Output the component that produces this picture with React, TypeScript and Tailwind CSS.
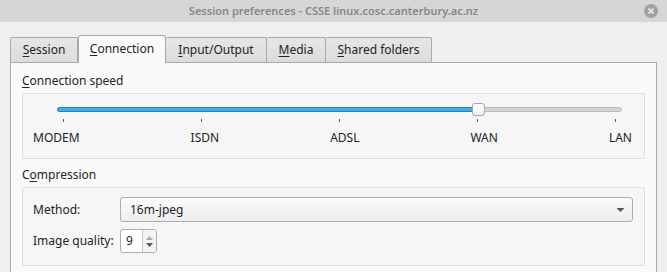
import React from 'react'

const TABS = [
  { key: 's', label: 'Session', mn: 0, w: 'w-[68px]' },
  { key: 'c', label: 'Connection', mn: 0, w: 'w-[88px]' },
  { key: 'io', label: 'Input/Output', mn: 0, w: 'w-[101px]' },
  { key: 'm', label: 'Media', mn: 0, w: 'w-[59px]' },
  { key: 'sf', label: 'Shared folders', mn: 0, w: 'w-[106px]' },
]

const SPEEDS = ['MODEM', 'ISDN', 'ADSL', 'WAN', 'LAN']
const SPEED_INDEX = 3

// underline the mnemonic letter, like Qt does
function Mnemonic({ text, at }: { text: string; at: number }) {
  return (
    <>
      {text.slice(0, at)}
      <span className="underline underline-offset-[2px] decoration-1">{text[at]}</span>
      {text.slice(at + 1)}
    </>
  )
}

function Tabs() {
  return (
    <div className="flex items-end h-[28px]">
      {TABS.map(t => {
        const active = t.key === 'c'
        return (
          <div
            key={t.key}
            className={
              active
                ? `${t.w} h-[28px] -mb-px z-10 flex items-center justify-center border border-b-0 border-[#a9a9a9] rounded-t-[3px] bg-[#fafafa]`
                : `${t.w} h-[25px] flex items-center justify-center border border-l-0 first:border-l border-b-0 border-[#a9a9a9] rounded-t-[2px] bg-gradient-to-b from-[#e6e6e6] to-[#dcdcdc]`
            }
          >
            <span className={active ? 'pb-[1px]' : ''}>
              <Mnemonic text={t.label} at={t.mn} />
            </span>
          </div>
        )
      })}
    </div>
  )
}

function SpeedSlider() {
  const pct = (SPEED_INDEX / (SPEEDS.length - 1)) * 100
  return (
    <div className="h-[66px] border border-[#dedede] rounded-[2px] bg-[#f6f6f6] flex flex-col">
      <div className="pl-[34px] pr-[22px] pt-[13px]">
        <div className="relative h-[5px]">
          <div className="absolute inset-0 rounded-full bg-[#d4d4d4] border border-[#b9b9b9]" />
          <div
            className="absolute left-0 top-0 bottom-0 rounded-full bg-[#3daee9] border border-[#2c7fb5]"
            style={{ width: `${pct}%` }}
          />
          <div className="absolute inset-y-0 left-[6px] right-[6px]">
            <div
              className="absolute top-[-4px] w-[13px] h-[13px] -ml-[6px] rounded-[3px] border border-[#a5a5a5] bg-gradient-to-b from-white to-[#f0f0f0]"
              style={{ left: `${pct}%` }}
            />
          </div>
        </div>
        <div className="flex justify-between px-[6px] mt-[7px]">
          {SPEEDS.map(s => (
            <div key={s} className="w-px h-[3px] bg-[#2f5f86]" />
          ))}
        </div>
      </div>
      <div className="flex justify-between pl-[10px] pr-[12px] mt-[7px] leading-[18px]">
        {SPEEDS.map(s => (
          <span key={s}>{s}</span>
        ))}
      </div>
    </div>
  )
}

function Compression() {
  return (
    <div className="h-[79px] border border-[#dedede] rounded-[2px] bg-[#f6f6f6] pl-[10px] pr-[11px] pt-[9px] flex flex-col gap-[7px]">
      <div className="flex items-center">
        <span className="w-[87px] whitespace-nowrap">Method:</span>
        <div className="flex-1 h-[25px] flex items-center justify-between pl-[9px] pr-[7px] border border-[#adadad] rounded-[3px] bg-gradient-to-b from-[#fbfbfb] to-[#ededed]">
          <span>16m-jpeg</span>
          <svg width="9" height="6" viewBox="0 0 9 6">
            <path d="M0.5 1 L8.5 1 L4.5 5 Z" fill="#555" />
          </svg>
        </div>
      </div>
      <div className="flex items-center">
        <span className="w-[87px] whitespace-nowrap">Image quality:</span>
        <div className="w-[37px] h-[24px] flex border border-[#adadad] rounded-[3px] bg-white">
          <span className="flex-1 pl-[5px] flex items-center">9</span>
          <div className="w-[14px] border-l border-[#c8c8c8] bg-[#f3f3f3] rounded-r-[3px] flex flex-col items-center justify-center gap-[3px]">
            <svg width="7" height="4" viewBox="0 0 7 4">
              <path d="M0 4 L3.5 0 L7 4 Z" fill="#a8a8a8" />
            </svg>
            <svg width="7" height="4" viewBox="0 0 7 4">
              <path d="M0 0 L7 0 L3.5 4 Z" fill="#555" />
            </svg>
          </div>
        </div>
      </div>
    </div>
  )
}

export default function App() {
  return (
    <div className="w-[667px] h-[272px] overflow-hidden bg-[#efefef] text-[12px] text-[#232323] font-['Noto_Sans',sans-serif]">
      <div className="relative h-[22px] bg-[#d6d6d6] flex items-center justify-center">
        <span className="text-[#868686] font-semibold text-[11px]">Session preferences - CSSE linux.cosc.canterbury.ac.nz</span>
        <div className="absolute right-[9px] top-[4px] w-[14px] h-[14px] rounded-full bg-[#a2a2a2] flex items-center justify-center">
          <svg width="6" height="6" viewBox="0 0 6 6">
            <path d="M0.5 0.5 L5.5 5.5 M5.5 0.5 L0.5 5.5" stroke="#ececec" strokeWidth="1.6" />
          </svg>
        </div>
      </div>
      <div className="pl-[10px] pr-[10px] pt-[12px]">
        <Tabs />
        <div className="h-[220px] border border-[#a9a9a9] bg-[#fafafa] px-[11px] pt-[9px]">
          <div className="leading-[18px] mb-[3px]">
            <Mnemonic text="Connection speed" at={0} />
          </div>
          <SpeedSlider />
          <div className="leading-[18px] mt-[7px] mb-[3px]">
            <Mnemonic text="Compression" at={1} />
          </div>
          <Compression />
        </div>
      </div>
    </div>
  )
}
